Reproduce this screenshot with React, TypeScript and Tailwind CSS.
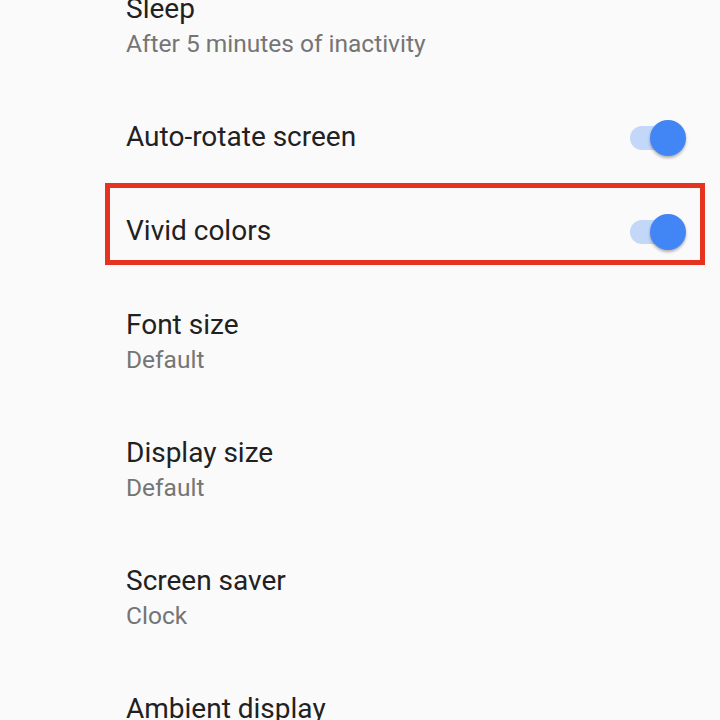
import React from 'react';

interface Item {
  title: string;
  summary?: string;
  toggle?: boolean;
  highlight?: boolean;
}

const items: Item[] = [
  { title: 'Sleep', summary: 'After 5 minutes of inactivity' },
  { title: 'Auto-rotate screen', toggle: true },
  { title: 'Vivid colors', toggle: true, highlight: true },
  { title: 'Font size', summary: 'Default' },
  { title: 'Display size', summary: 'Default' },
  { title: 'Screen saver', summary: 'Clock' },
  { title: 'Ambient display', summary: 'Show new notifications' },
];

function Switch() {
  return (
    <div className="relative w-[56px] h-[36px] shrink-0">
      {/* track */}
      <div className="absolute left-0 top-[6px] w-[52px] h-[24px] rounded-full bg-[#c3d7f8]" />
      {/* thumb */}
      <div className="absolute right-0 top-0 w-[36px] h-[36px] rounded-full bg-[#4285f4] shadow-[0_2px_3px_rgba(0,0,0,0.3)]" />
    </div>
  );
}

function SettingRow({ item }: { item: Item }) {
  if (item.summary) {
    return (
      <div className="pl-[126px] pr-[34px] pt-[29px] pb-[29px] h-[128px]">
        <div className="text-[28px] leading-[34px] text-[#212121]">{item.title}</div>
        <div className="text-[24.5px] leading-[36px] text-[#757575]">{item.summary}</div>
      </div>
    );
  }

  return (
    <div className="relative flex items-center justify-between pl-[126px] pr-[34px] h-[94px]">
      <div className="text-[28px] leading-[34px] text-[#212121] mb-[3px]">{item.title}</div>
      {item.toggle && <Switch />}
      {item.highlight && (
        // red annotation box drawn over the row
        <div className="absolute left-[105px] right-[15px] top-[-2px] h-[82px] border-[5px] border-[#e53320]" />
      )}
    </div>
  );
}

export default function App() {
  return (
    <div
      className="w-[720px] h-[720px] overflow-hidden bg-[#fafafa]"
      style={{ fontFamily: 'Roboto, "Noto Sans", sans-serif' }}
    >
      <div className="mt-[-37px]">
        {items.map((item) => (
          <SettingRow key={item.title} item={item} />
        ))}
      </div>
    </div>
  );
}
